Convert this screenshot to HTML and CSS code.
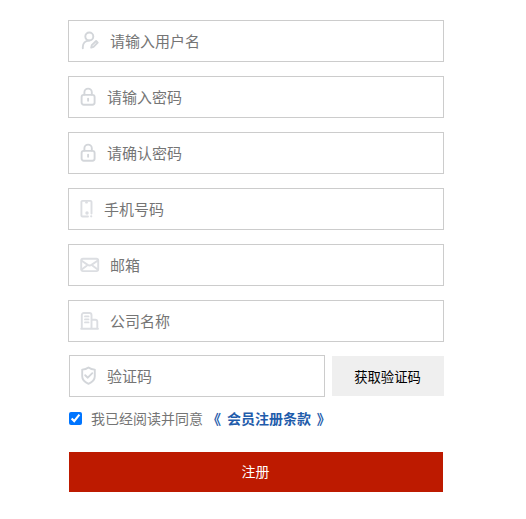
FILE: index.html
```html
<!DOCTYPE html>
<html lang="zh-CN">
<head>
    <meta charset="UTF-8">
    <meta name="viewport" content="width=device-width, initial-scale=1.0">
    <title>会员注册</title>
    <link rel="stylesheet" href="styles.css">
</head>
<body>

    <form class="register">
        <!-- Account -->
        <label class="field">
            <svg class="icon" width="20" height="20" viewBox="0 0 20 20">
                <circle cx="9.3" cy="5.5" r="4"/>
                <path d="M2.8 17.2v-1.2c0-3.7 2.6-6.3 6.2-6.5"/>
                <path d="M11.2 16.6l.6-2.5 4.3-4.1 1.6 1.6-4.2 4.3z"/>
            </svg>
            <input type="text" placeholder="请输入用户名">
        </label>
        <label class="field password">
            <svg class="icon" width="18" height="20" viewBox="0 0 18 20">
                <rect x="1.6" y="7.9" width="13" height="9.8" rx="2.2"/>
                <path d="M4.4 7.5V5.3a3.7 3.7 0 0 1 7.4 0v2.2M8.1 11.6v2.2"/>
            </svg>
            <input type="password" placeholder="请输入密码">
        </label>
        <label class="field password">
            <svg class="icon" width="18" height="20" viewBox="0 0 18 20">
                <rect x="1.6" y="7.9" width="13" height="9.8" rx="2.2"/>
                <path d="M4.4 7.5V5.3a3.7 3.7 0 0 1 7.4 0v2.2M8.1 11.6v2.2"/>
            </svg>
            <input type="password" placeholder="请确认密码">
        </label>

        <!-- Contact -->
        <label class="field phone">
            <svg class="icon light" width="14" height="20" viewBox="0 0 14 20">
                <path d="M8 17.5H2.5a1.1 1.1 0 0 1-1.1-1.1V3a1.1 1.1 0 0 1 1.1-1.1h7.9a1.1 1.1 0 0 1 1.1 1.1v11.5M6 3.6h1"/>
                <circle class="dot" cx="7" cy="14" r="1.7"/>
                <circle class="dot" cx="11.2" cy="17.3" r="1.1"/>
            </svg>
            <input type="text" placeholder="手机号码">
        </label>
        <label class="field">
            <svg class="icon light" width="20" height="20" viewBox="0 0 20 20">
                <rect x="1.2" y="3.8" width="17" height="12.3" rx="1.8"/>
                <path d="M1.7 5.7l6 4.2c1.2.8 2.6.8 3.8 0l6-4.2M1.7 14.5l5-3.8M17.7 14.5l-5-3.8"/>
            </svg>
            <input type="text" placeholder="邮箱">
        </label>
        <label class="field company">
            <svg class="icon light" width="20" height="20" viewBox="0 0 20 20">
                <path d="M1.8 17.6V4a2 2 0 0 1 2-2h5.7a2 2 0 0 1 2 2v13.6M11.5 8.7h3.8a2 2 0 0 1 2 2v6.9M1.2 17.7h16.8"/>
                <path d="M5 5.4h3.5M5 8.4h3.5M5 11.4h3.5"/>
            </svg>
            <input type="text" placeholder="公司名称">
        </label>

        <!-- Verification code -->
        <div class="code-row">
            <label class="field code">
                <svg class="icon" width="18" height="20" viewBox="0 0 18 20">
                    <path d="M8.5 1.5c1.9 1.4 3.9 2 6.3 2.1v6.7c0 3.6-2.3 5.9-6.3 7.5-4-1.6-6.3-3.9-6.3-7.5V3.6c2.4-.1 4.4-.7 6.3-2.1z"/>
                    <path d="M5.2 9.2l2.6 2.5 4.5-4.5"/>
                </svg>
                <input type="text" placeholder="验证码">
            </label>
            <button type="button" class="get-code">获取验证码</button>
        </div>

        <div class="agree">
            <input type="checkbox" id="agree" checked>
            <label for="agree">我已经阅读并同意</label>
            <a class="terms" href="#">《 会员注册条款 》</a>
        </div>

        <button type="button" class="submit">注册</button>
    </form>

</body>
</html>
```

FILE: styles.css
```css
* {
    box-sizing: border-box;
}

body {
    margin: 0;
    background-color: #fff;
    font-family: "Liberation Sans", "Noto Sans CJK SC", sans-serif;
}

.register {
    width: 376px;
    margin: 20px 0 0 68px;
}

/* Inputs */
.field {
    display: flex;
    align-items: center;
    gap: 10px;
    height: 42px;
    margin-bottom: 14px;
    padding: 0 11px;
    border: 1px solid #ccc;
}

.field input {
    flex: 1;
    min-width: 0;
    height: 38px;
    padding: 0;
    border: 0;
    outline: none;
    background: none;
    font-family: inherit;
    font-size: 15px;
}

.field input::placeholder {
    color: #757575;
}

.field.password {
    gap: 9px;
}

.icon {
    flex: none;
    fill: none;
    stroke: #d3d6da;
    stroke-width: 1.9;
    stroke-linecap: round;
    stroke-linejoin: round;
}

.icon.light {
    stroke: #dcdee2;
}

.dot {
    fill: #dcdee2;
    stroke: none;
}

.code-row {
    display: flex;
    align-items: center;
    gap: 7px;
    margin: -1px 0 13px 1px;
}

.field.code {
    gap: 9px;
    width: 256px;
    margin-bottom: 0;
    padding-left: 10px;
}

.get-code {
    width: 112px;
    height: 40px;
    padding: 0 1px 0 0;
    border: 0;
    background-color: #efefef;
    color: #000;
    font-family: inherit;
    font-size: 13.333px;
}

/* Agreement */
.agree {
    display: flex;
    align-items: center;
    height: 16px;
    color: #757575;
    font-size: 14px;
}

.agree input {
    width: 13px;
    height: 13px;
    margin: 1px 9px 0 1px;
}

.terms {
    margin-left: 4px;
    color: #1f5cab;
    font-weight: bold;
    text-decoration: none;
    word-spacing: 2px;
}

.submit {
    display: block;
    width: 374px;
    height: 40px;
    margin: 26px 0 0 1px;
    padding: 0 1px 2px 0;
    border: 0;
    background-color: #bd1a00;
    color: #fff;
    font-family: inherit;
    font-size: 14px;
}
```
